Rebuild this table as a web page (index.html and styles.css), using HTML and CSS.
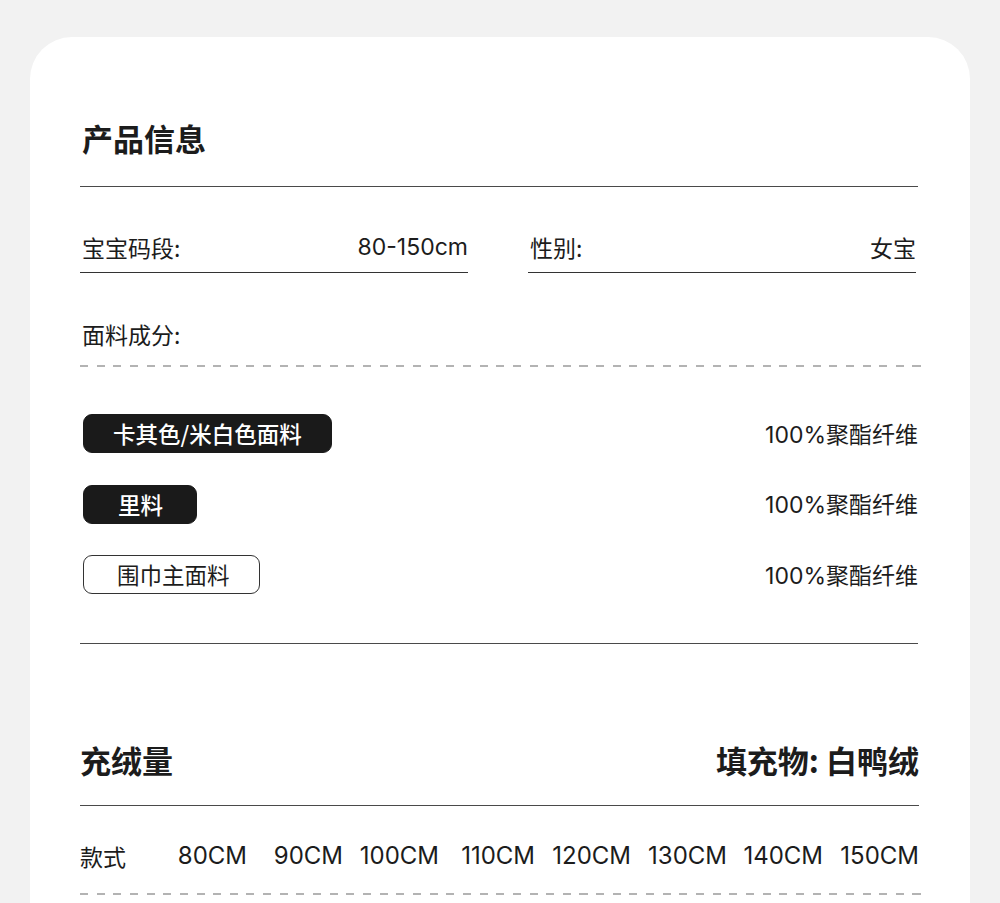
FILE: index.html
```html
<!DOCTYPE html>
<html lang="zh-CN">
<head>
  <meta charset="UTF-8" />
  <meta name="viewport" content="width=device-width, initial-scale=1.0"/>
  <title>产品信息</title>
  <link rel="stylesheet" href="styles.css">
</head>
<body>
  <div class="card">
    <!-- 产品信息 -->
    <div class="section-head first">
      <h2>产品信息</h2>
    </div>

    <div class="spec-row">
      <div class="spec">
        <span>宝宝码段:</span>
        <span class="num">80-150cm</span>
      </div>
      <div class="spec">
        <span>性别:</span>
        <span>女宝</span>
      </div>
    </div>

    <div class="fabric-label">面料成分:</div>
    <div class="dash"></div>

    <div class="fabric-list">
      <div class="fabric">
        <span class="tag">卡其色/米白色面料</span>
        <span class="fabric-value"><span class="num">100%</span>聚酯纤维</span>
      </div>
      <div class="fabric">
        <span class="tag short">里料</span>
        <span class="fabric-value"><span class="num">100%</span>聚酯纤维</span>
      </div>
      <div class="fabric">
        <span class="tag outline">围巾主面料</span>
        <span class="fabric-value"><span class="num">100%</span>聚酯纤维</span>
      </div>
    </div>

    <!-- 充绒量 -->
    <div class="section-head second">
      <h2>充绒量</h2>
      <h2>填充物: 白鸭绒</h2>
    </div>

    <div class="size-row">
      <span class="size-label">款式</span>
      <span class="num">80CM</span>
      <span class="num">90CM</span>
      <span class="num">100CM</span>
      <span class="num">110CM</span>
      <span class="num">120CM</span>
      <span class="num">130CM</span>
      <span class="num">140CM</span>
      <span class="num">150CM</span>
    </div>
    <div class="dash"></div>
  </div>
</body>
</html>
```

FILE: styles.css
```css
:root {
  --bg: #f2f2f2;
  --card: #ffffff;
  --text: #1c1c1c;
  --rule: #4a4a4a;
  --dash: #b3b3b3;
}

* {
  box-sizing: border-box;
  margin: 0;
  padding: 0;
}

body {
  background: var(--bg);
  color: var(--text);
  font-family: "Noto Sans CJK SC", "Noto Sans", sans-serif;
  height: 903px;
  overflow: hidden;
}

.card {
  margin: 37px 30px 0;
  background: var(--card);
  border-radius: 42px 42px 0 0;
  padding: 81px 51px 40px 50px;
  min-height: 1000px;
}

.num {
  font-family: "Inter", "Noto Sans", sans-serif;
  font-weight: 400;
}

.section-head {
  display: flex;
  justify-content: space-between;
  padding-bottom: 28px;
  border-bottom: 1px solid var(--rule);
}

.section-head.first {
  margin-right: 1px;
}

.section-head h2 {
  font-size: 31px;
  line-height: 40px;
  font-weight: 700;
  padding-left: 2px;
}

.section-head.second {
  margin-top: 96px;
  padding-bottom: 25px;
}

.section-head.second h2 {
  padding-left: 0;
}

.spec-row {
  display: flex;
  gap: 60px;
  margin-top: 45px;
  padding-right: 3px;
}

.spec {
  flex: 1;
  display: flex;
  justify-content: space-between;
  font-size: 23px;
  line-height: 30px;
  padding: 0 0 10px 2px;
  border-bottom: 1.5px solid #333;
}

.fabric-label {
  margin-top: 46px;
  font-size: 23px;
  line-height: 30px;
  padding: 0 0 16px 2px;
}

.dash {
  height: 2px;
  margin-right: -2px;
  background: repeating-linear-gradient(to right, var(--dash) 0 8px, transparent 8px 16.65px);
}

.fabric-list {
  display: flex;
  flex-direction: column;
  gap: 31.5px;
  margin-top: 47px;
  padding-bottom: 49px;
  margin-right: 1px;
  border-bottom: 1px solid var(--rule);
}

.fabric {
  display: flex;
  justify-content: space-between;
  align-items: center;
  height: 39px;
  padding-left: 3px;
}

.tag {
  height: 39px;
  line-height: 37px;
  padding: 0 29px;
  font-size: 22.5px;
  font-weight: 500;
  color: #ffffff;
  background: #1a1a1a;
  border: 1px solid #1a1a1a;
  border-radius: 9px;
}

.tag.short {
  padding: 0 33px 0 34px;
}

.tag.outline {
  color: var(--text);
  background: transparent;
  border-color: #333;
  font-weight: 400;
  padding: 0 29px 0 33px;
}

.fabric-value {
  font-size: 23px;
  line-height: 30px;
}

.size-row {
  display: grid;
  grid-template-columns: 71px repeat(8, 96px);
  margin-top: 35px;
  padding-bottom: 22px;
  font-size: 24px;
  line-height: 30px;
}

.size-row .num {
  text-align: right;
}

.size-label {
  font-size: 23px;
}
```
